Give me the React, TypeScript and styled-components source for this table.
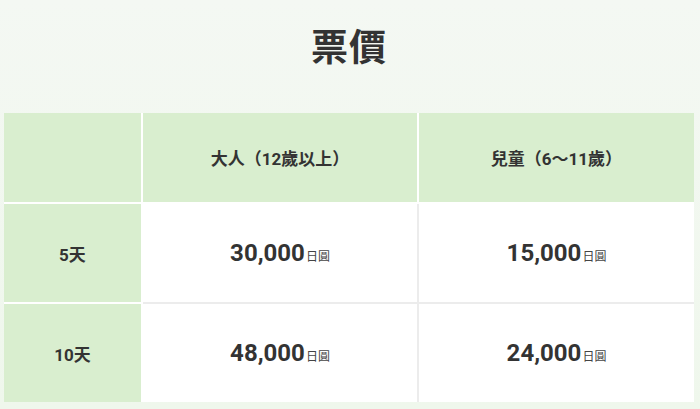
import React from 'react';
import styled, { createGlobalStyle } from 'styled-components';

const GlobalStyle = createGlobalStyle`
  html, body {
    margin: 0;
    padding: 0;
    background: #f2f7f0;
  }
  body {
    font-family: Roboto, "Noto Sans CJK TC", "Noto Sans", sans-serif;
    color: #333;
  }
`;

const Section = styled.section`
  width: 700px;
  height: 409px;
  box-sizing: border-box;
  padding: 0 6px 0 4px;
  background: linear-gradient(180deg, #f4f8f3 0%, #eff7ec 100%);
  overflow: hidden;
`;

const Title = styled.h2`
  margin: 0;
  height: 113px;
  display: flex;
  align-items: center;
  justify-content: center;
  padding-bottom: 24px;
  box-sizing: border-box;
  font-size: 37px;
  font-weight: 700;
  color: #333;
  letter-spacing: 1px;
`;

const Table = styled.table`
  width: 690px;
  border-collapse: separate;
  border-spacing: 0;
  table-layout: fixed;
`;

const HeadCell = styled.th<{ $divider?: boolean }>`
  height: 91px;
  background: #d9eecf;
  border-right: ${(p) => (p.$divider ? '2px solid #fff' : '0')};
  border-bottom: 2px solid #fff;
  font-size: 17px;
  font-weight: 700;
  color: #333;
  text-align: center;
  vertical-align: middle;
  padding: 0;
  box-sizing: border-box;
`;

const RowLabel = styled.th<{ $last?: boolean }>`
  height: ${(p) => (p.$last ? '98px' : '100px')};
  background: #d9eecf;
  border-right: 2px solid #fff;
  border-bottom: ${(p) => (p.$last ? '0' : '2px solid #fff')};
  font-size: 17px;
  font-weight: 700;
  color: #333;
  text-align: center;
  padding: 0;
  box-sizing: border-box;
`;

const PriceCell = styled.td<{ $last?: boolean; $divider?: boolean }>`
  background: #fff;
  border-right: ${(p) => (p.$divider ? '2px solid #ececec' : '0')};
  border-bottom: ${(p) => (p.$last ? '0' : '2px solid #ececec')};
  text-align: center;
  vertical-align: middle;
  padding: 0;
  box-sizing: border-box;
`;

const Amount = styled.span`
  font-size: 24px;
  font-weight: 700;
  color: #333;
`;

const Unit = styled.span`
  font-size: 12px;
  font-weight: 400;
  color: #444;
  margin-left: 1px;
`;

const rows = [
  { label: '5天', adult: '30,000', child: '15,000' },
  { label: '10天', adult: '48,000', child: '24,000' },
];

export default function App() {
  return (
    <>
      <GlobalStyle />
      <Section>
        <Title>票價</Title>
        <Table>
          <colgroup>
            <col style={{ width: 139 }} />
            <col style={{ width: 276 }} />
            <col style={{ width: 275 }} />
          </colgroup>
          <thead>
            <tr>
              <HeadCell $divider />
              <HeadCell $divider>大人（12歲以上）</HeadCell>
              <HeadCell>兒童（6〜11歲）</HeadCell>
            </tr>
          </thead>
          <tbody>
            {rows.map((r, i) => {
              const last = i === rows.length - 1;
              return (
                <tr key={r.label}>
                  <RowLabel $last={last}>{r.label}</RowLabel>
                  <PriceCell $last={last} $divider>
                    <Amount>{r.adult}</Amount>
                    <Unit>日圓</Unit>
                  </PriceCell>
                  <PriceCell $last={last}>
                    <Amount>{r.child}</Amount>
                    <Unit>日圓</Unit>
                  </PriceCell>
                </tr>
              );
            })}
          </tbody>
        </Table>
      </Section>
    </>
  );
}
